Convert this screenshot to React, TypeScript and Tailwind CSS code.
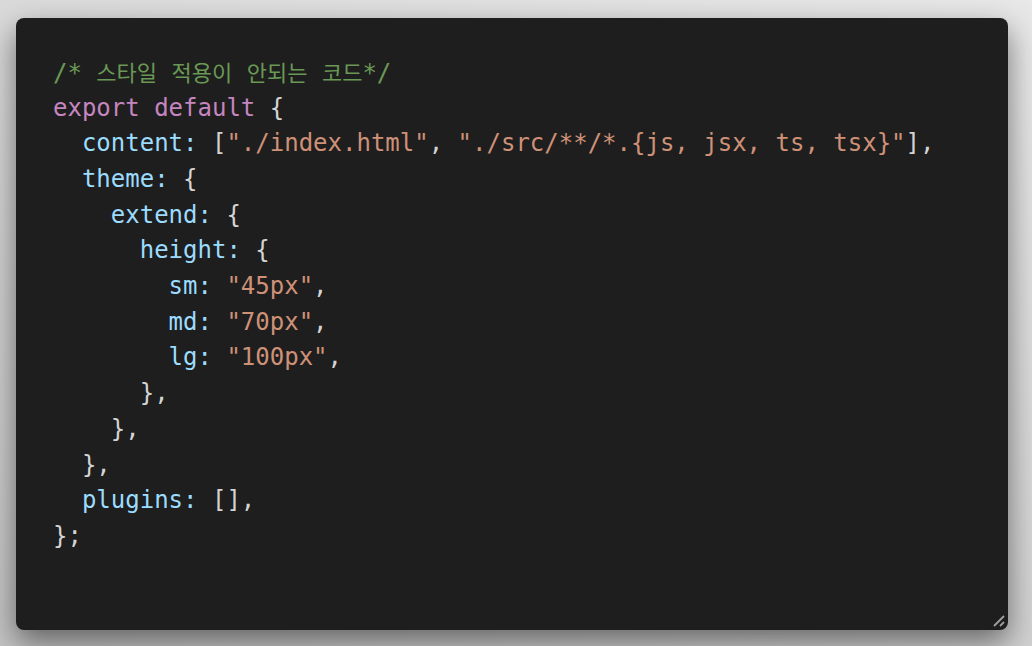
const C = {
  cm: 'text-[#6a9955]',
  kw: 'text-[#c586c0]',
  pr: 'text-[#9cdcfe]',
  st: 'text-[#ce9178]',
  pn: 'text-[#d4d4d4]',
}

type Tok = [keyof typeof C, string]

const lines: Tok[][] = [
  [['kw', 'export default'], ['pn', ' {']],
  [['pr', '  content:'], ['pn', ' ['], ['st', '"./index.html"'], ['pn', ', '], ['st', '"./src/**/*.{js, jsx, ts, tsx}"'], ['pn', '],']],
  [['pr', '  theme:'], ['pn', ' {']],
  [['pr', '    extend:'], ['pn', ' {']],
  [['pr', '      height:'], ['pn', ' {']],
  [['pr', '        sm:'], ['pn', ' '], ['st', '"45px"'], ['pn', ',']],
  [['pr', '        md:'], ['pn', ' '], ['st', '"70px"'], ['pn', ',']],
  [['pr', '        lg:'], ['pn', ' '], ['st', '"100px"'], ['pn', ',']],
  [['pn', '      },']],
  [['pn', '    },']],
  [['pn', '  },']],
  [['pr', '  plugins:'], ['pn', ' [],']],
  [['pn', '};']],
]

const ResizeHandle = () => (
  <svg width="14" height="14" viewBox="0 0 14 14" className="absolute right-[2px] bottom-[2px]">
    <line x1="2" y1="12" x2="12" y2="2" stroke="#a0a0a0" strokeWidth="1.8" />
    <line x1="8" y1="12" x2="12" y2="8" stroke="#a0a0a0" strokeWidth="1.8" />
  </svg>
)

const ko = "font-['Noto_Sans_CJK_KR',sans-serif] text-[22px]"

export default function App() {
  return (
    <div className="w-[1032px] h-[646px] bg-[linear-gradient(200deg,#e8e8e8,#d2d2d2_60%,#c4c4c4)] pt-[18px] pl-[16px] pr-[24px] overflow-hidden">
      <div className="relative h-[612px] rounded-[8px] bg-[#1e1e1e] shadow-[0_12px_30px_rgba(0,0,0,0.5)] pt-[36px] pl-[37px]">
        <pre className="font-['DejaVu_Sans_Mono','Noto_Sans_CJK_KR',monospace] text-[24px] leading-[35.7px] whitespace-pre">
          <div className={`${C.cm} h-[36.5px]`}>
            {'/* '}
            <span className={ko}>스타일</span>
            {' '}
            <span className={ko}>적용이</span>
            {' '}
            <span className={ko}>안되는</span>
            {' '}
            <span className={ko}>코드</span>
            {'*/'}
          </div>
          {lines.map((toks, i) => (
            <div key={i}>
              {toks.map(([k, t], j) => (
                <span key={j} className={C[k]}>
                  {t}
                </span>
              ))}
            </div>
          ))}
        </pre>
        <ResizeHandle />
      </div>
    </div>
  )
}
